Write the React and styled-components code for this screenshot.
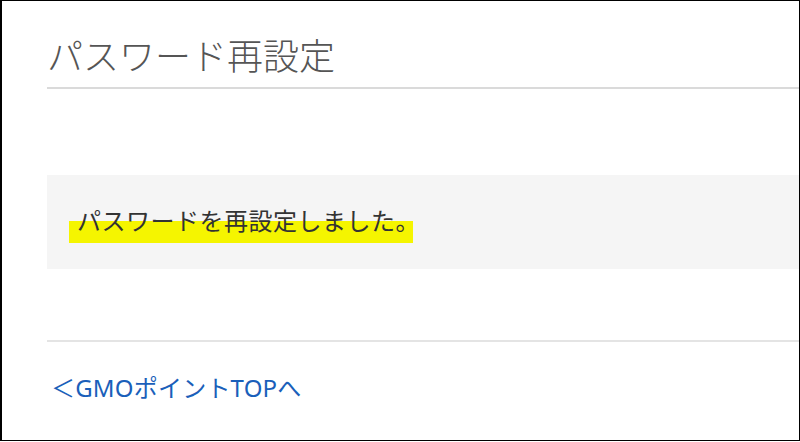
import React from 'react'
import styled, { createGlobalStyle } from 'styled-components'

const GlobalStyle = createGlobalStyle`
	html, body {
		margin: 0;
		padding: 0;
		background: #fff;
	}
	body {
		font-family: 'Noto Sans CJK JP', 'Noto Sans', sans-serif;
	}
`

const App = () => {
	return (
		<>
			<GlobalStyle />
			<Frame>
				<Title>パスワード再設定</Title>
				<Notice>
					<Marker>パスワードを再設定しました。</Marker>
				</Notice>
				<Footer>
					<BackLink href='#'>＜GMOポイントTOPへ</BackLink>
				</Footer>
			</Frame>
		</>
	)
}

const Frame = styled.div`
	box-sizing: border-box;
	width: 800px;
	height: 441px;
	border-top: 1px solid #000;
	border-left: 2px solid #000;
	border-right: 1px solid #000;
	border-bottom: 1px solid #000;
	padding-left: 45px;
	display: flex;
	flex-direction: column;
	overflow: hidden;
`

const Title = styled.h1`
	margin: 35px 0 0;
	padding-bottom: 15px;
	border-bottom: 2px solid #dadada;
	font-family: 'Noto Sans CJK JP', sans-serif;
	font-size: 36px;
	line-height: 36px;
	font-weight: 300;
	color: #555;
	letter-spacing: 0;
`

const Notice = styled.div`
	box-sizing: border-box;
	margin-top: 86px;
	height: 94px;
	padding: 33px 0 0 30px;
	background: #f5f5f5;
	font-family: 'Noto Sans CJK JP', sans-serif;
	font-size: 24px;
	line-height: 24px;
	color: #333;
`

const Marker = styled.span`
	display: inline-block;
	margin-left: -8px;
	padding: 0 0 11px 8px;
	letter-spacing: 0.5px;
	background: linear-gradient(transparent 13px, #f5f500 13px) no-repeat;
	background-size: calc(100% - 7px) 100%;
`

const Footer = styled.div`
	margin-top: 71px;
	padding: 33px 0 0 4px;
	border-top: 2px solid #e4e4e4;
	font-size: 24px;
	line-height: 24px;
`

const BackLink = styled.a`
	font-family: 'Noto Sans', 'Noto Sans CJK JP', sans-serif;
	color: #1a5fba;
	text-decoration: none;
	letter-spacing: 0.2px;
`

export default App
